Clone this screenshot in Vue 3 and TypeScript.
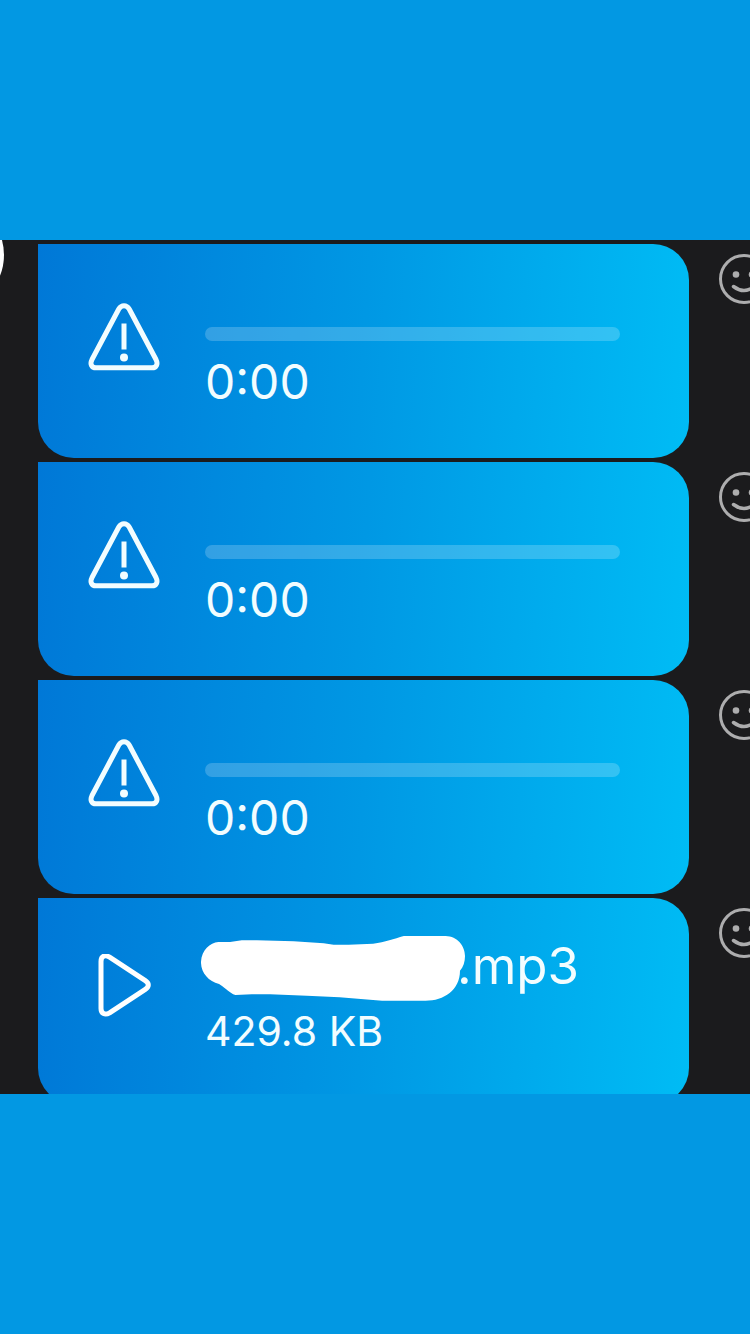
<script setup lang="ts">
import { ref } from 'vue'

interface VoiceMessage {
  id: number
  time: string
}

const failed = ref<VoiceMessage[]>([
  { id: 1, time: '0:00' },
  { id: 2, time: '0:00' },
  { id: 3, time: '0:00' },
])
const file = { extension: '.mp3', size: '429.8 KB' }
</script>

<template>
  <div class="page">
    <main class="chat">
      <span class="avatar" aria-hidden="true"></span>

      <article v-for="message in failed" :key="message.id" class="row">
        <div class="bubble">
          <button class="action" type="button" aria-label="Retry">
            <svg width="80" height="80" viewBox="0 0 80 80">
              <path
                d="M34.8 9 L8 59.5 C5.8 64 7.5 67.8 12 67.8 L68 67.8 C72.5 67.8 74.2 64 72 59.5 L45.2 9 C42.6 4.6 37.4 4.6 34.8 9 Z"
                fill="none" stroke="#f2fdff" stroke-width="5" stroke-linejoin="round"
              />
              <path d="M40 23.5 V49.5" fill="none" stroke="#f2fdff" stroke-width="5" />
              <circle cx="40" cy="57.5" r="4" fill="#f2fdff" />
            </svg>
          </button>
          <div class="body">
            <input class="track" type="range" min="0" max="100" value="0" aria-label="Playback position" />
            <time class="time">{{ message.time }}</time>
          </div>
        </div>
        <button class="react" type="button" aria-label="Add reaction">
          <svg width="52" height="52" viewBox="0 0 52 52" fill="none" stroke="#adadae" stroke-width="3">
            <circle cx="26" cy="26" r="23.5" />
            <path d="M15.5 33.5 Q26 41.5 36.5 33.5" stroke-width="3.5" stroke-linecap="round" />
            <circle cx="18" cy="21.5" r="3.3" fill="#adadae" stroke="none" />
            <circle cx="34" cy="21.5" r="3.3" fill="#adadae" stroke="none" />
          </svg>
        </button>
      </article>

      <article class="row">
        <div class="bubble short">
          <button class="action" type="button" aria-label="Play">
            <svg width="80" height="80" viewBox="0 0 80 80">
              <path
                d="M17 7.5 C17 2 21 0.3 25.6 3.2 L61.3 26.7 C65.3 29.3 65.3 32.7 61.3 35.3 L25.6 58.8 C21 61.5 17 59.7 17 54.5 Z"
                fill="none" stroke="#ffffff" stroke-width="5" stroke-linejoin="round"
              />
            </svg>
          </button>
          <div class="body file">
            <div class="name">
              <svg class="scribble" width="264" height="65" viewBox="63 138 790 195" preserveAspectRatio="none" aria-hidden="true">
                <path
                  d="M63 215 C65 180 90 158 115 156 L150 156 L185 151 L230 151 L340 154 L430 160 L460 164 L505 164 L578 161 C615 157 640 146 670 138 L795 138 C830 139 853 168 853 198 C853 216 848 231 838 242 C838 300 790 332 735 332 L605 332 L478 322 L380 317 L270 313 L215 313 L166 315 C147 309 140 296 117 282 C85 274 62 247 63 215 Z"
                  fill="#ffffff"
                />
              </svg>
              <span>{{ file.extension }}</span>
            </div>
            <div class="size">{{ file.size }}</div>
          </div>
        </div>
        <button class="react" type="button" aria-label="Add reaction">
          <svg width="52" height="52" viewBox="0 0 52 52" fill="none" stroke="#adadae" stroke-width="3">
            <circle cx="26" cy="26" r="23.5" />
            <path d="M15.5 33.5 Q26 41.5 36.5 33.5" stroke-width="3.5" stroke-linecap="round" />
            <circle cx="18" cy="21.5" r="3.3" fill="#adadae" stroke="none" />
            <circle cx="34" cy="21.5" r="3.3" fill="#adadae" stroke="none" />
          </svg>
        </button>
      </article>
    </main>
  </div>
</template>

<style>
body {
  margin: 0;
  background: #0298e3;
}
</style>

<style scoped>
.page {
  box-sizing: border-box;
  display: flex;
  flex-direction: column;
  height: 100vh;
  padding: 240px 0;
  background: #0298e3;
  font-family: Inter, "Liberation Sans", sans-serif;
  color: #f2fdff;
}

.chat {
  position: relative;
  flex: 1;
  min-height: 0;
  box-sizing: border-box;
  display: flex;
  flex-direction: column;
  gap: 4px;
  padding-top: 4px;
  overflow: hidden;
  background: #1b1b1d;
}

.avatar {
  position: absolute;
  left: -108px;
  top: -41px;
  width: 112px;
  height: 112px;
  border-radius: 50%;
  background: #ffffff;
}

.row {
  flex: none;
  display: grid;
  grid-template-columns: minmax(0, 1fr) 61px;
  padding-left: 38px;
}

.bubble {
  box-sizing: border-box;
  display: flex;
  align-items: flex-start;
  gap: 41px;
  height: 214px;
  padding: 56px 69px 0 46px;
  border-radius: 0 36px 36px 36px;
  background: linear-gradient(94deg, #0078d7 0%, #0098e4 50%, #00bcf5 100%);
}

.short {
  height: 206px;
}

button {
  flex: none;
  display: block;
  margin: 0;
  padding: 0;
  border: 0;
  background: none;
  cursor: pointer;
}

button svg {
  display: block;
}

.body {
  flex: 1;
  min-width: 0;
  display: flex;
  flex-direction: column;
  padding-top: 27px;
}

.track {
  appearance: none;
  display: block;
  width: 100%;
  height: 14px;
  margin: 0;
  border-radius: 7px;
  background: rgba(255, 255, 255, 0.2);
}

.track::-webkit-slider-thumb {
  appearance: none;
  width: 1px;
  height: 14px;
  background: transparent;
}

.time {
  margin-top: 13px;
  font-size: 48px;
  line-height: 56px;
}

.file {
  padding-top: 0;
}

.name {
  position: relative;
  padding-left: 252px;
  margin-top: -18px;
  font-size: 51px;
  line-height: 60px;
}

.scribble {
  position: absolute;
  left: -4px;
  top: 0;
}

.size {
  margin-top: 11px;
  font-size: 41px;
  line-height: 48px;
}

.react {
  width: 52px;
  height: 52px;
  margin: 9px 0 0 29px;
}
</style>
